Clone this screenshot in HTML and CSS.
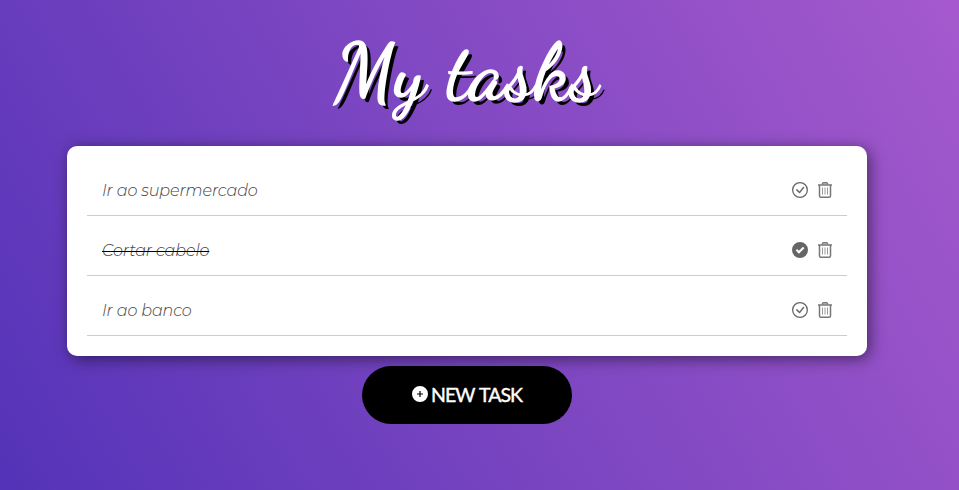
FILE: index.html
```html
<!DOCTYPE html>
<html lang="en">
<head>
<meta charset="utf-8">
<title>My tasks</title>
<link rel="stylesheet" href="styles.css">
</head>
<body>
<svg class="sprite" aria-hidden="true">
  <symbol id="check" viewBox="0 0 16 16">
    <circle class="ring" cx="8" cy="8" r="7.35"/>
    <path d="M10.97 4.97a.235.235 0 0 0-.02.022L7.477 9.417 5.384 7.323a.75.75 0 0 0-1.06 1.06L6.97 11.03a.75.75 0 0 0 1.079-.02l3.992-4.99a.75.75 0 0 0-1.071-1.05z"/>
  </symbol>
  <symbol id="check-fill" viewBox="0 0 16 16">
    <path fill-rule="evenodd" d="M16 8A8 8 0 1 1 0 8a8 8 0 0 1 16 0zM6.9 11.8L12.4 6.2 11 4.7 6.9 8.8 5.1 7 3.7 8.5z"/>
  </symbol>
  <symbol id="trash" viewBox="0 0 16 16">
    <path class="lid" d="M5 2.5L5.8 .9Q6 .6 6.5 .6H9.5Q10 .6 10.2 .9L11 2.5"/>
    <path class="line" d="M1 3H15M2.5 3.3V13.7Q2.5 15.3 4.1 15.3H11.9Q13.5 15.3 13.5 13.7V3.3"/>
    <path class="rib" d="M5.5 5.5V12.5M8 5.5V12.5M10.5 5.5V12.5"/>
  </symbol>
</svg>
<main class="page">
  <h1 class="title">My tasks</h1>
  <ul class="tasks">
    <li class="task"><span class="name">Ir ao supermercado</span><span class="actions"><svg class="icon"><use href="#check"/></svg><svg class="icon"><use href="#trash"/></svg></span></li>
    <li class="task"><span class="name done">Cortar cabelo</span><span class="actions"><svg class="icon"><use href="#check-fill"/></svg><svg class="icon"><use href="#trash"/></svg></span></li>
    <li class="task"><span class="name">Ir ao banco</span><span class="actions"><svg class="icon"><use href="#check"/></svg><svg class="icon"><use href="#trash"/></svg></span></li>
  </ul>
  <button class="new-task"><svg class="plus" viewBox="0 0 16 16"><path d="M16 8A8 8 0 1 1 0 8a8 8 0 0 1 16 0zM8.6 5H7.4v2.4H5v1.2h2.4V11h1.2V8.6H11V7.4H8.6z"/></svg><span class="label">NEW TASK</span></button>
</main>
</body>
</html>
```
FILE: styles.css
```css
* { box-sizing: border-box; }
body {
  margin: 0;
  height: 490px;
  overflow: hidden;
  background: linear-gradient(60deg, #5433b8, #7e47c2 50%, #a559cd);
  font-family: Montserrat, Lato, sans-serif;
}
.sprite { position: absolute; width: 0; height: 0; }
.page {
  width: 934px;
  display: flex;
  flex-direction: column;
  align-items: center;
}
.title {
  height: 146px;
  margin: 0;
  padding-bottom: 2px;
  display: flex;
  align-items: center;
  color: #fff;
  font: 400 80px/1 "Dancing Script", Lato, cursive;
  letter-spacing: .6px;
  -webkit-text-stroke: 1.5px #fff;
  text-shadow: 4px 4px 0 #000;
}
.tasks {
  width: 800px;
  height: 210px;
  margin: 0;
  padding: 10px 20px 20px;
  list-style: none;
  background: #fff;
  border-radius: 10px;
  box-shadow: 3px 3px 15px rgba(0, 0, 0, .5);
}
.task {
  height: 60px;
  padding: 10px 14px 0 15px;
  display: flex;
  justify-content: space-between;
  align-items: flex-start;
  border-bottom: 1px solid #ccc;
}
.name {
  font-size: 16px;
  font-style: italic;
  font-weight: 300;
  line-height: 50px;
  letter-spacing: -.12px;
  color: #444;
}
.done { text-decoration: line-through #000 1px; }
.actions { display: flex; gap: 9px; padding-top: 16px; }
.icon { width: 16px; height: 16px; fill: #666; }
.ring { fill: none; stroke: #666; stroke-width: 1.3; }
.lid { fill: #bbb; stroke: #777; stroke-width: 1.2; }
.line { fill: none; stroke: #777; stroke-width: 1.5; }
.rib { fill: none; stroke: #999; stroke-width: 1; }
.new-task {
  width: 210px;
  height: 58px;
  margin-top: 10px;
  padding: 0 0 2px;
  display: flex;
  justify-content: center;
  align-items: center;
  gap: 3px;
  border: 0;
  border-radius: 30px;
  background: #000;
  color: #fff;
  font: 400 19.5px Lato, sans-serif;
  letter-spacing: -1px;
  word-spacing: 1.5px;
  -webkit-text-stroke: .4px #fff;
}
.plus { width: 16px; height: 16px; fill: #fff; }
```
